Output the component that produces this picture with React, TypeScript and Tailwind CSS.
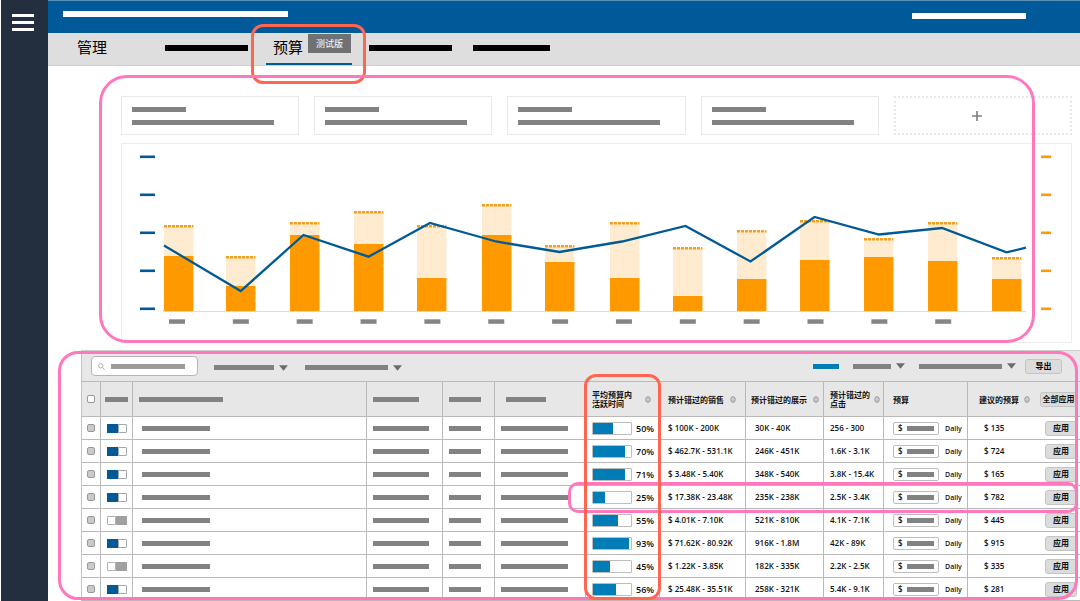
import { useState } from "react";

type BarProps = { className?: string };

// Placeholder stroke standing in for a text label
const Bar = ({ className = "" }: BarProps) => <span className={`block shrink-0 ${className}`} />;

const cards = [1, 2, 3, 4];

// x, top of the potential area, top of the spent area
const columns = [
  [42, 82, 112],
  [104, 113, 142],
  [168, 79, 91],
  [232, 68, 100],
  [295, 82, 134],
  [360, 61, 91],
  [423, 102, 118],
  [488, 79, 134],
  [551, 104, 152],
  [615, 87, 135],
  [678, 77, 116],
  [742, 95, 113],
  [806, 79, 117],
  [870, 114, 135],
];

const linePoints =
  "42,101.5 118.7,147 181.5,91 246.5,112.7 308,79 374,97.5 437.5,108 500,97.5 563.5,82 628.5,117.5 692.5,73 757,90.5 820,84 884.5,108.3 904,103.7";

const rows = [
  { on: true, fill: 52, pct: "50%", sales: "$ 100K - 200K", views: "30K - 40K", clicks: "256 - 300", suggested: "$ 135" },
  { on: true, fill: 84, pct: "70%", sales: "$ 462.7K - 531.1K", views: "246K - 451K", clicks: "1.6K - 3.1K", suggested: "$ 724" },
  { on: true, fill: 83, pct: "71%", sales: "$ 3.48K - 5.40K", views: "348K - 540K", clicks: "3.8K - 15.4K", suggested: "$ 165" },
  { on: true, fill: 31, pct: "25%", sales: "$ 17.38K - 23.48K", views: "235K - 238K", clicks: "2.5K - 3.4K", suggested: "$ 782" },
  { on: false, fill: 65, pct: "55%", sales: "$ 4.01K - 7.10K", views: "521K - 810K", clicks: "4.1K - 7.1K", suggested: "$ 445" },
  { on: true, fill: 94, pct: "93%", sales: "$ 71.62K - 80.92K", views: "916K - 1.8M", clicks: "42K - 89K", suggested: "$ 915" },
  { on: false, fill: 44, pct: "45%", sales: "$ 1.22K - 3.85K", views: "182K - 335K", clicks: "2.2K - 2.5K", suggested: "$ 335" },
  { on: true, fill: 61, pct: "56%", sales: "$ 25.48K - 35.51K", views: "258K - 321K", clicks: "5.4K - 9.1K", suggested: "$ 281" },
];

const InfoIcon = () => (
  <svg viewBox="0 0 6 7" className="w-[6px] h-[7px] shrink-0" fill="none">
    <ellipse cx="3" cy="3.5" rx="2.2" ry="2.8" stroke="#808080" strokeWidth="0.9" />
    <path d="M3 2v0.7M3 3.2v2" stroke="#777" strokeWidth="0.7" />
  </svg>
);

const Caret = () => (
  <svg viewBox="0 0 9 6" className="w-[9px] h-[6px] shrink-0">
    <path d="M0 0.3H9L4.5 5.7Z" fill="#6b6c6e" />
  </svg>
);

const Chart = () => (
  <svg viewBox="0 0 949 198" className="block w-full h-auto">
    {[12, 50, 88, 126, 164].map((y) => (
      <g key={y}>
        <rect x="18" y={y - 0.5} width="15" height="2.6" fill="#005a96" />
        <rect x="919" y={y - 0.5} width="10" height="2.6" fill="#ff9900" />
      </g>
    ))}
    <path d="M41 167.5H904" stroke="#dcdcdc" />
    {columns.map(([x, top, spent]) => (
      <g key={x}>
        <rect x={x} y={top} width="29.4" height={167 - top} fill="#ffebcf" />
        <rect x={x} y={spent} width="29.4" height={167 - spent} fill="#ff9900" />
        <path d={`M${x} ${top + 0.3}h29.4`} stroke="#f0a020" strokeWidth="2.4" strokeDasharray="3 1" />
      </g>
    ))}
    {columns.slice(0, 13).map(([x], i) => (
      <rect key={x} x={47 + i * 63.85} y="175.3" width="16" height="4.5" fill="#858585" />
    ))}
    <polyline points={linePoints} fill="none" stroke="#005a96" strokeWidth="2.3" />
  </svg>
);

const Toggle = ({ on, label }: { on: boolean; label: string }) => {
  const [active, setActive] = useState(on);
  return (
    <button
      role="switch"
      aria-checked={active}
      aria-label={label}
      onClick={() => setActive(!active)}
      className="flex w-5 h-[9px]"
    >
      {active ? (
        <>
          <span className="w-[11px] h-[9px] bg-[#005a96]" />
          <span className="w-[9px] h-[9px] bg-white border border-[#a5a8ab] rounded-r-[1px]" />
        </>
      ) : (
        <>
          <span className="w-[9px] h-[9px] bg-white border border-[#b0b0b0] rounded-l-[1px]" />
          <span className="w-[11px] h-[9px] bg-[#a0a0a0]" />
        </>
      )}
    </button>
  );
};

const Filter = ({ width, label }: { width: string; label: string }) => (
  <button aria-label={label} className="flex items-center gap-[5px]">
    <Bar className={`h-[5px] bg-[#828284] ${width}`} />
    <Caret />
  </button>
);

const checkboxStyle = "block mx-auto appearance-none w-2 h-2 rounded-[2px] border border-[#999]";
const th = "border-r border-b border-[#b9b9b9] p-0 text-left font-bold leading-[9px] whitespace-nowrap";
const td = "border-r border-b border-[#b9b9b9] p-0 whitespace-nowrap font-semibold";
const button = "h-[15px] rounded-[3px] border border-[#c4c4c4] bg-[#dcdcdc] font-bold leading-none text-center";

const CampaignTable = () => (
  <table className="w-full table-fixed border-separate border-spacing-0 border-l border-[#c4c4c4] text-[8px] text-[#111]">
    <colgroup>
      <col className="w-[19px]" />
      <col className="w-8" />
      <col />
      <col className="w-[76px]" />
      <col className="w-[52px]" />
      <col className="w-[91px]" />
      <col className="w-[74px]" />
      <col className="w-[86px]" />
      <col className="w-[78px]" />
      <col className="w-[60px]" />
      <col className="w-[84px]" />
      <col className="w-[112px]" />
    </colgroup>
    <thead>
      <tr className="h-[35px] bg-[#e7e7e7]">
        <th className={th}>
          <input type="checkbox" aria-label="全选" className={`${checkboxStyle} bg-white`} />
        </th>
        <th className={`${th} pl-1`}><Bar className="w-[23px] h-[5px] bg-[#828284]" /></th>
        <th className={`${th} pl-[6px]`}><Bar className="w-[84px] h-[5px] bg-[#828284]" /></th>
        <th className={`${th} pl-[6px]`}><Bar className="w-[46px] h-[5px] bg-[#828284]" /></th>
        <th className={`${th} pl-[6px]`}><Bar className="w-8 h-[5px] bg-[#828284]" /></th>
        <th className={`${th} pl-[11px]`}><Bar className="w-10 h-[5px] bg-[#828284]" /></th>
        <th className={`${th} pl-[6px] pr-2`}>
          <div className="flex items-center justify-between">
            <span>平均预算内<br />活跃时间</span>
            <InfoIcon />
          </div>
        </th>
        <th className={`${th} pl-2`}>
          <div className="flex items-center gap-[6px]">预计错过的销售 <InfoIcon /></div>
        </th>
        <th className={`${th} pl-[5px]`}>
          <div className="flex items-center gap-[6px]">预计错过的展示 <InfoIcon /></div>
        </th>
        <th className={`${th} pl-[6px]`}>
          <div className="flex items-center gap-1">
            <span>预计错过的<br />点击</span>
            <InfoIcon />
          </div>
        </th>
        <th className={`${th} pl-[9px]`}>预算</th>
        <th className={`${th} border-r-0 pl-[11px] pr-[3px]`}>
          <div className="flex items-center justify-between">
            <span className="flex items-center gap-[5px]">建议的预算 <InfoIcon /></span>
            <button className={`${button} w-[37px]`}>全部应用</button>
          </div>
        </th>
      </tr>
    </thead>
    <tbody>
      {rows.map((row, i) => (
        <tr key={row.sales} className="h-[23px]">
          <td className={td}>
            <input type="checkbox" aria-label={`选择 ${i + 1}`} className={`${checkboxStyle} bg-[#cacaca]`} />
          </td>
          <td className={`${td} pl-[6px]`}><Toggle on={row.on} label={`启用 ${i + 1}`} /></td>
          <td className={`${td} pl-[9px]`}><Bar className="w-[68px] h-[5px] bg-[#828284]" /></td>
          <td className={`${td} pl-[6px]`}><Bar className="w-14 h-[5px] bg-[#828284]" /></td>
          <td className={`${td} pl-[6px]`}><Bar className="w-8 h-[5px] bg-[#828284]" /></td>
          <td className={`${td} pl-[6px]`}><Bar className="w-[67px] h-[5px] bg-[#828284]" /></td>
          <td className={`${td} pl-[6px]`}>
            <div className="flex items-center gap-1 text-[9px] leading-[13px]">
              <div className="w-10 h-[13px] border border-[#bdbdbd] rounded-[1px] bg-white">
                <div className="h-full bg-[#007cb6]" style={{ width: `${row.fill}%` }} />
              </div>
              {row.pct}
            </div>
          </td>
          <td className={`${td} pl-2`}>{row.sales}</td>
          <td className={`${td} pl-[9px]`}>{row.views}</td>
          <td className={`${td} pl-[6px]`}>{row.clicks}</td>
          <td className={`${td} pl-[9px]`}>
            <div className="flex items-center gap-[6px]">
              <label className="flex items-center gap-1 w-[46px] h-[13px] pl-1 border border-[#bdbdbd] rounded-[2px] bg-white leading-none">
                $
                <Bar className="w-[27px] h-[5px] bg-[#828284]" />
                <input type="text" aria-label={`预算 ${i + 1}`} className="w-0 min-w-0 flex-1 outline-none" />
              </label>
              <span className="text-[7px] leading-[13px]">Daily</span>
            </div>
          </td>
          <td className={`${td} border-r-0 pl-4 pr-[3px]`}>
            <div className="flex items-center justify-between">
              {row.suggested}
              <button className={`${button} w-8`}>应用</button>
            </div>
          </td>
        </tr>
      ))}
    </tbody>
  </table>
);

export default function App() {
  return (
    <div className="flex min-h-screen bg-white overflow-hidden font-['Open_Sans','Noto_Sans_CJK_SC',sans-serif]">
      <aside className="w-12 shrink-0 border-l border-white bg-[#232f3e]">
        <button aria-label="菜单" className="flex flex-col gap-1 mt-[14px] ml-[11px]">
          <Bar className="w-[22px] h-[3px] bg-white" />
          <Bar className="w-[22px] h-[3px] bg-white" />
          <Bar className="w-[22px] h-[3px] bg-white" />
        </button>
      </aside>

      <div className="flex-1 min-w-0">
        <header className="flex justify-between h-[33px] pl-[15px] pr-[54px] border-t border-[#5a8fb8] bg-[#005a99]">
          <Bar className="w-[225px] h-[6px] mt-[10px] bg-white" />
          <Bar className="w-[114px] h-[6px] mt-3 bg-white" />
        </header>

        <nav className="flex h-[33px] pl-[29px] bg-[#dedede] border-b border-[#cfcfcf] text-[15px] leading-7 text-black">
          <a href="#manage" className="w-[88px]">管理</a>
          <a href="#reports" aria-label="报告" className="pt-3"><Bar className="w-[83px] h-[6px] bg-black" /></a>
          <a href="#budget" className="relative flex items-start w-[86px] ml-[18px] mr-[17px] pl-[7px] border-b-2 border-[#005a96] gap-[5px]">
            预算
            <span className="mt-px w-[43px] h-[19px] bg-[#6f7173] text-center text-[9px] leading-[19px] text-white">测试版</span>
            <span className="absolute -top-[9px] -bottom-[21px] -left-[15px] -right-[14px] rounded-xl border-[3px] border-[#ff6652]" />
          </a>
          <a href="#bulk" aria-label="批量" className="pt-3"><Bar className="w-[83px] h-[6px] bg-black" /></a>
          <a href="#settings" aria-label="设置" className="pt-3 ml-[21px]"><Bar className="w-[77px] h-[6px] bg-black" /></a>
        </nav>

        <section className="relative pt-[30px] pl-[73px] pr-2">
          <div className="grid grid-cols-5 gap-[15px] mb-2">
            {cards.map((card) => (
              <div key={card} className="flex flex-col justify-center gap-2 h-[39px] pl-[10px] border border-[#e9e9e9]">
                <Bar className="w-[54px] h-[5px] bg-[#828282]" />
                <Bar className="w-[142px] h-[5px] bg-[#828282]" />
              </div>
            ))}
            <button aria-label="添加" className="flex items-center justify-center h-[39px] pr-3 border-2 border-dotted border-[#e8e8e8]">
              <svg viewBox="0 0 10 10" className="w-[10px] h-[10px]">
                <path d="M5 0v10M0 5h10" stroke="#7d7d7d" strokeWidth="1.6" />
              </svg>
            </button>
          </div>
          <div className="border border-[#ececec]">
            <Chart />
          </div>
          <div className="absolute top-[9px] bottom-0 left-[51px] right-[45px] rounded-[28px] border-[3px] border-[#ff77bd] pointer-events-none" />
        </section>

        <section className="relative mt-[7px] pl-[33px]">
          <div className="flex items-center h-8 pl-[9px] pr-[18px] border-t border-l border-b border-t-[#cccccc] border-l-[#c4c4c4] border-b-[#b9b9b9] bg-[#e7e7e7]">
            <label className="flex items-center w-[107px] h-5 pl-[6px] bg-white border border-[#b5b5b5] rounded-[4px]">
              <svg viewBox="0 0 7 7" className="w-[7px] h-[7px] mr-[6px] shrink-0" fill="none" stroke="#999" strokeWidth="0.8">
                <circle cx="2.8" cy="2.8" r="2.2" />
                <path d="M4.5 4.5L6.6 6.6" />
              </svg>
              <Bar className="w-[74px] h-[5px] bg-[#9b9b9b]" />
              <input type="text" aria-label="搜索" className="w-0 min-w-0 flex-1 outline-none" />
            </label>
            <div className="flex gap-[17px] ml-4 mt-[3px]">
              <Filter width="w-[60px]" label="筛选" />
              <Filter width="w-[83px]" label="状态" />
            </div>
            <div className="flex items-center gap-[14px] ml-auto">
              <Bar className="w-[26px] h-[5px] bg-[#007cb6]" />
              <Filter width="w-[38px]" label="列" />
              <Filter width="w-[83px]" label="日期范围" />
            </div>
            <button className={`${button} w-[37px] ml-[9px] text-[8px]`}>导出</button>
          </div>
          <CampaignTable />
          <div className="absolute top-px bottom-px left-[10px] right-[2px] rounded-[20px] border-[3px] border-[#ff77bd] pointer-events-none" />
          <div className="absolute top-[132px] h-[31px] w-[510px] right-[2px] rounded-[10px] border-[3px] border-[#ff77bd] pointer-events-none" />
          <div className="absolute top-6 bottom-px w-[77px] right-[419px] rounded-xl border-[3px] border-[#ff6652] pointer-events-none" />
        </section>
      </div>
    </div>
  );
}
